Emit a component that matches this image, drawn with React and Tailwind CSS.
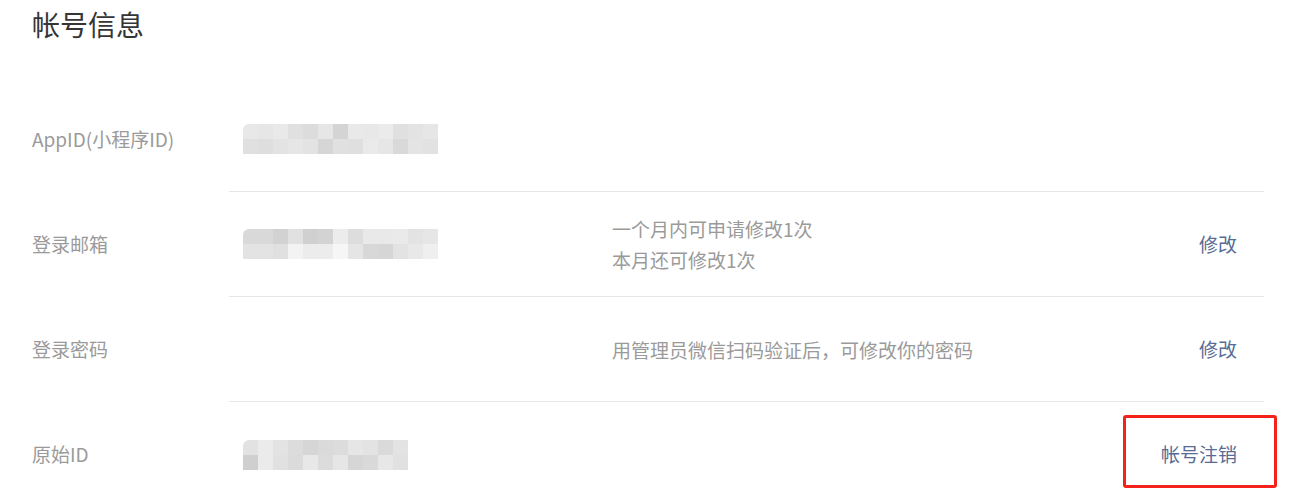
const font = { fontFamily: '"Noto Sans CJK SC", "Noto Sans", sans-serif' };

const appIdCells = [
  ["#e8e8e8", "#e6e6e6", "#e9e9e9", "#e0e0e0", "#dcdcdc", "#e6e6e6", "#d4d4d4", "#e9e9e9", "#e8e8e8", "#ebebeb", "#e0e0e0", "#e3e3e3", "#e6e6e6"],
  ["#e0e0e0", "#dedede", "#e3e3e3", "#e6e6e6", "#e3e3e3", "#d6d6d6", "#e0e0e0", "#dfdfdf", "#eaeaea", "#e6e6e6", "#d9d9d9", "#e4e4e4", "#e2e2e2"],
];
const emailCells = [
  ["#d9d9d9", "#d9d9d9", "#d2d2d2", "#e1e1e1", "#d0d0d0", "#d3d3d3", "#ececec", "#dddddd", "#e9e9e9", "#e9e9e9", "#eaeaea", "#e3e3e3", "#e6e6e6"],
  ["#e3e3e3", "#e3e3e3", "#e0e0e0", "#f3f3f3", "#ececec", "#ececec", "#f6f6f6", "#e5e5e5", "#d8d8d8", "#d6d6d6", "#e3e3e3", "#e8e8e8", "#efefef"],
];
const origCells = [
  ["#e2e2e2", "#ebebeb", "#e3e3e3", "#dcdcdc", "#d6d6d6", "#dadada", "#dcdcdc", "#e6e6e6", "#e3e3e3", "#dadada", "#e3e3e3"],
  ["#cfcfcf", "#ebebeb", "#e1e1e1", "#dbdbdb", "#e8e8e8", "#dcdcdc", "#e6e6e6", "#d6d6d6", "#d9d9d9", "#e7e7e7", "#e1e1e1"],
];

function Mosaic({ cells }) {
  return (
    <div className="flex flex-col rounded-tl-[6px] overflow-hidden">
      {cells.map((row, i) => (
        <div key={i} className="flex">
          {row.map((c, j) => (
            <div key={j} className="w-[15px] h-[15px]" style={{ backgroundColor: c }} />
          ))}
        </div>
      ))}
    </div>
  );
}

function Row({ label, value, desc, action, last, boxed }) {
  return (
    <div className="flex">
      <div className="w-[197px] h-[105px] flex items-center text-[19px] text-[#9a9a9a]">
        {label}
      </div>
      <div
        className={
          "flex-1 h-[105px] flex items-center pr-[27px] " +
          (last ? "" : "border-b border-[#e7e7eb]")
        }
      >
        <div className="w-[383px] pl-[14px]">{value}</div>
        <div className="flex-1 text-[19px] leading-[31px] text-[#9a9a9a]">
          {desc}
        </div>
        {action && (
          <span className="relative text-[19px] text-[#576b95]">
            {action}
            {boxed && (
              <span className="absolute -left-[38px] -right-[40px] -top-[25px] -bottom-[19px] border-[3px] border-[#f5221b] rounded-[3px]" />
            )}
          </span>
        )}
      </div>
    </div>
  );
}

export default function App() {
  return (
    <div className="w-[1294px] h-[497px] bg-white overflow-hidden px-[32px]" style={font}>
      <h2 className="pt-[4px] text-[28px] leading-[40px] text-[#353535] font-normal">
        帐号信息
      </h2>
      <div className="mt-[43px] w-[1232px]">
        <Row label="AppID(小程序ID)" value={<Mosaic cells={appIdCells} />} />
        <Row
          label="登录邮箱"
          value={<Mosaic cells={emailCells} />}
          desc={
            <>
              <div>一个月内可申请修改1次</div>
              <div>本月还可修改1次</div>
            </>
          }
          action="修改"
        />
        <Row
          label="登录密码"
          desc="用管理员微信扫码验证后，可修改你的密码"
          action="修改"
        />
        <Row
          label="原始ID"
          value={<Mosaic cells={origCells} />}
          action="帐号注销"
          last
          boxed
        />
      </div>
    </div>
  );
}
